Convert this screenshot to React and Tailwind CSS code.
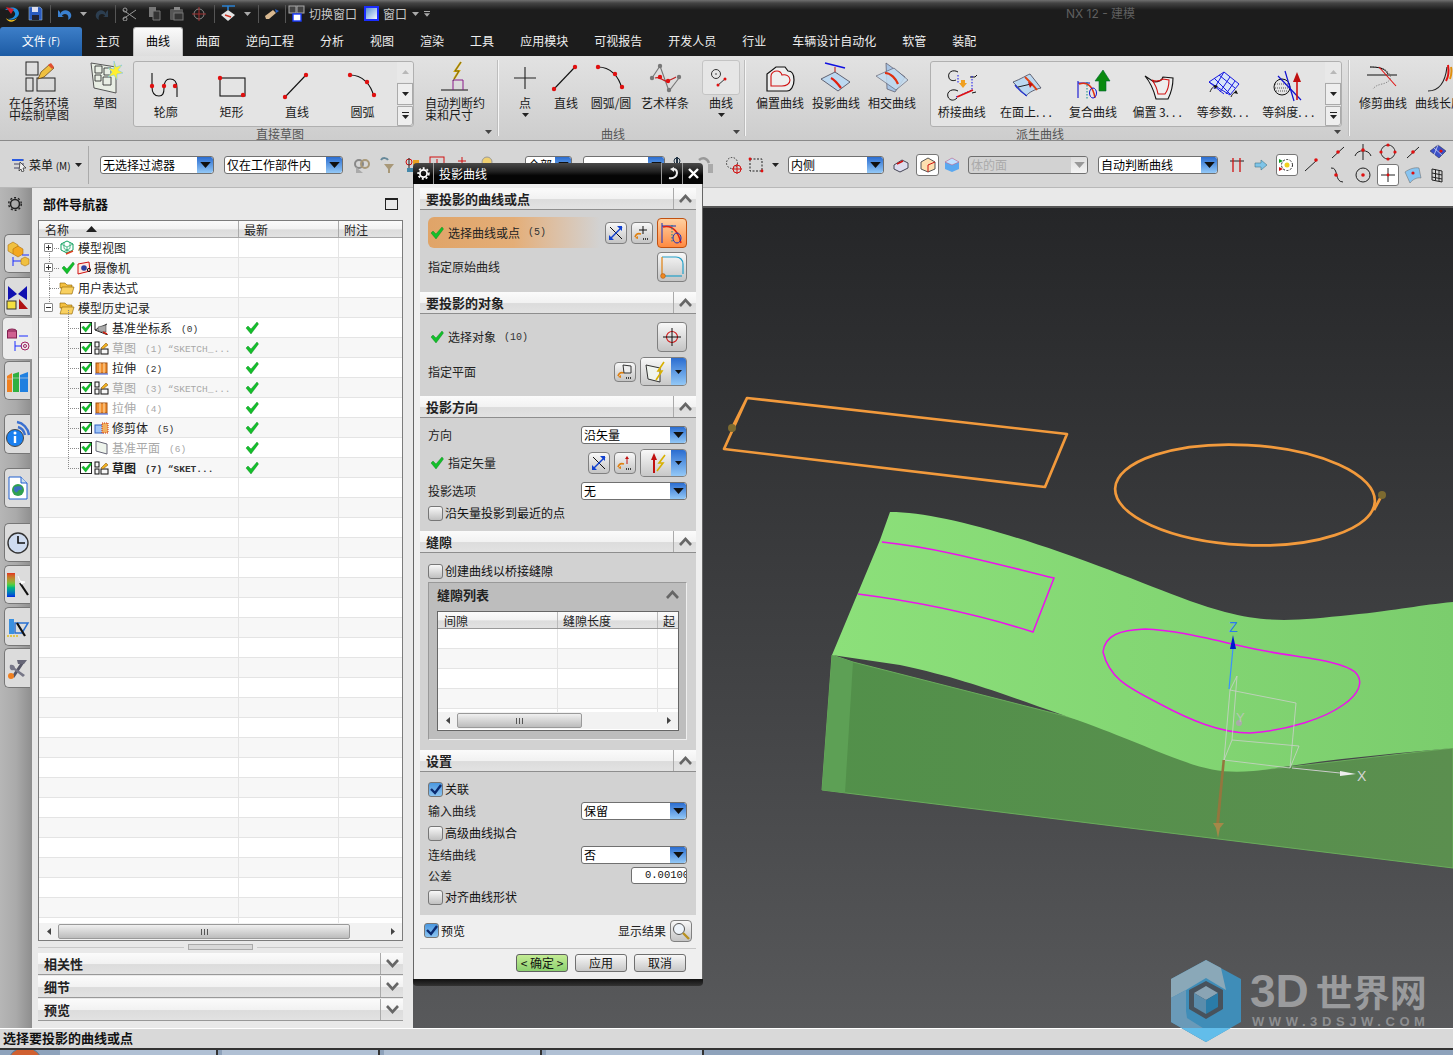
import React from 'react';

const R = ({ x, y, r = 2.2, c = '#e01010' }) => <circle cx={x} cy={y} r={r} fill={c} />;
const Svg = ({ w = 36, h = 36, children }) => (
  <svg width={w} height={h} viewBox={`0 0 ${w} ${h}`} fill="none" className="block shrink-0">{children}</svg>
);
const Tri = ({ c = '#222', w = 7, h = 4 }) => (
  <svg width={w} height={h} viewBox="0 0 7 4" className="block shrink-0"><path d="M0 0h7L3.5 4z" fill={c} /></svg>
);

/* ribbon icons */
const IcTask = () => <Svg><rect x="5" y="2" width="12" height="13" stroke="#222" /><rect x="5" y="18" width="7" height="13" stroke="#222" /><rect x="16" y="18" width="18" height="13" stroke="#222" /><path d="M17 19l3-7 9-8 4 4-10 9z" fill="#f0c040" stroke="#5a3a10" strokeWidth=".7" /><path d="M27 5l4 4 2-2-3-4z" fill="#e05030" /></Svg>;
const IcSketch = () => <Svg><path d="M4 3l25 4v26L7 28z" fill="#e8eee4" stroke="#555" /><path d="M8 6h7v7H8zM17 8h7v7h-7zM8 15h6v6H8zM16 17h8v8h-8z" stroke="#333" strokeWidth=".9" /><path d="M27 1l2 6 6-2-4 5 5 3-6 1 0 6-3-5-6 2 4-5-4-4 6 1z" fill="#ffef30" stroke="#7ac8e8" strokeWidth=".6" /></Svg>;
const IcProfile = () => <Svg w={34} h={30}><path d="M3 2v14c0 6 3 9 7 9s5-3 5-8 2-9 6-9 7 3 7 9v9" stroke="#111" strokeWidth="1.1" /><R x={3} y={15} /><R x={15} y={15} /><R x={26} y={15} /></Svg>;
const IcRect = () => <Svg w={34} h={30}><rect x="6" y="7" width="25" height="18" stroke="#111" strokeWidth="1.1" /><R x={6} y={7} /><R x={29} y={24} /></Svg>;
const IcLine = () => <Svg w={34} h={30}><path d="M5 26L26 4" stroke="#111" strokeWidth="1.1" /><R x={5} y={26} /><R x={26} y={4} /></Svg>;
const IcArc = () => <Svg w={34} h={30}><path d="M4 4c12 0 21 9 24 22" stroke="#111" strokeWidth="1.1" /><R x={4} y={4} /><R x={21} y={11} /><R x={28} y={24} /></Svg>;
const IcConstraint = () => <Svg><path d="M4 30h27" stroke="#111" /><path d="M16 30V20h10v10" stroke="#8a1a8a" /><path d="M24 2l-6 9h4l-5 8" stroke="#d4a800" strokeWidth="2" /><path d="M24 2l-6 9h4l-6 10" stroke="#333" strokeWidth=".5" /></Svg>;
const IcPlus = () => <Svg w={26} h={26}><path d="M13 2v22M2 13h22" stroke="#222" strokeWidth="1.1" /></Svg>;
const IcSpline = () => <Svg w={34} h={30}><path d="M4 15L12 3l9 25 10-13" stroke="#777" strokeWidth="1.1" /><path d="M7 15c6-2 8 4 12 3s5-2 9-4" stroke="#c02020" strokeWidth="1.3" /><R x={4} y={15} c="#777" /><R x={12} y={3} c="#777" /><R x={21} y={27} c="#777" /><R x={31} y={14} c="#777" /><R x={12} y={14} /><R x={20} y={18} /></Svg>;
const IcCurveMenu = () => <Svg w={22} h={22}><circle cx="6" cy="7" r="4.5" stroke="#333" /><circle cx="6" cy="7" r=".8" fill="#333" /><path d="M7 19l9-8" stroke="#333" /><R x={8} y={18} r={1.5} /><R x={15} y={12} r={1.5} /></Svg>;
const IcOffset = () => <Svg w={32} h={32}><path d="M3 29V12l9-7h9l3 4c4 0 6 4 6 9 0 6-3 11-7 11z" stroke="#111" strokeWidth="1.2" fill="#eee" /><path d="M7 14c0-3 3-5 6-5 3 0 4 1 5 4 4-1 8 1 8 5 0 4-4 6-8 6H7z" stroke="#d01010" strokeWidth="1.1" /></Svg>;
const IcProject = () => <Svg w={34} h={32}><path d="M6 1l20 5" stroke="#1010e0" strokeWidth="1.6" /><path d="M16 5v9" stroke="#c01010" /><path d="M13 11l3 5 3-5z" fill="#c01010" /><path d="M2 17l14-7 15 10-12 9z" fill="#bcd8f0" stroke="#445" strokeWidth=".8" /><path d="M12 16c4 2 7 6 10 10" stroke="#e02010" strokeWidth="2.2" /></Svg>;
const IcIntersect = () => <Svg w={34} h={32}><path d="M11 1l19 14-10 15-8-3z" fill="#a8c4e4" stroke="#556" strokeWidth=".7" /><path d="M1 14L19 6l14 12-12 10z" fill="#c4dcf0" stroke="#556" strokeWidth=".7" opacity=".85" /><path d="M10 11c6 0 11 6 13 11" stroke="#e03010" strokeWidth="2.2" /></Svg>;
const IcBridge = () => <Svg w={36} h={34}><path d="M14 3c-5-3-11 0-9 6 1 3 5 3 7 2M26 8h5l2-2" stroke="#111" /><path d="M14 22c-5-3-12 0-10 6 2 4 6 4 9 1M28 24l4-1" stroke="#111" /><path d="M12 28l16-7V6" stroke="#1010ee" strokeDasharray="1.5 1.5" /><path d="M13 28l16-7" stroke="#e01010" strokeWidth="1.6" /><path d="M14 6v8" stroke="#1010ee" strokeDasharray="1.5 1.5" /><path d="M17 11h4v3h2l-4 5-4-5h2z" fill="#f0a020" /></Svg>;
const IcOnFace = () => <Svg w={34} h={30}><path d="M3 11c8-3 14-7 17-8l11 14c-5 1-12 4-15 8z" fill="#bcd8f0" stroke="#445" strokeWidth=".8" /><path d="M15 6c4 4 9 9 12 13" stroke="#e04010" strokeWidth="1.8" /><path d="M8 16l13-3" stroke="#222" /><path d="M18 11l5 2-3 4z" fill="#c01010" /><path d="M5 14c3 4 7 8 12 11" stroke="#2030d0" strokeWidth="1.3" /></Svg>;
const IcComposite = () => <Svg w={36} h={34}><path d="M3 12v17M3 14h12" stroke="#1010d0" strokeWidth="1.1" /><path d="M4 15c8-3 14 2 16 14" stroke="#e03010" strokeWidth="1.5" /><path d="M12 13v18" stroke="#0a8a8a" strokeDasharray="1.5 1.5" /><ellipse cx="18" cy="24" rx="3.5" ry="5" stroke="#1010d0" /><path d="M23 12L31 1l7 11h-4v10h-7V12z" transform="translate(-3 0)" fill="#0a8a10" stroke="#063" strokeWidth=".6" /></Svg>;
const IcOffset3 = () => <Svg w={30} h={30}><path d="M1 5l9 6c6 0 8-2 9-5l10 1c0 8-2 15-5 21H12C10 20 7 12 1 5z" fill="#eee" stroke="#111" strokeWidth="1.1" /><path d="M8 9c4 2 8 1 11-1l6 1c0 6-1 10-4 14h-7C13 17 11 13 8 9z" stroke="#d01010" strokeWidth="1.1" /></Svg>;
const IcIso = () => <Svg w={36} h={32}><path d="M3 12L18 2l15 12-9 11z" fill="#d8e4f8" stroke="#1818e0" /><path d="M8 8l16 16M13 5l16 13M18 2L8 19M24 7L14 22M29 11L20 24M3 12l15 12" stroke="#1818e0" /><path d="M4 22c2-5 4-6 7-6" stroke="#222" /><path d="M25 27c1-3 3-5 6-5" stroke="#222" /><path d="M8 15l4 1-3 3z" fill="#111" /><path d="M30 20l2 4-4-1z" fill="#111" /></Svg>;
const IcSlope = () => <Svg w={34} h={32}><circle cx="9" cy="17" r="8" stroke="#111" /><path d="M2 14h14M2 18h14M3 21h12" stroke="#555" strokeDasharray="1 1" /><path d="M12 1l9 30" stroke="#1010d0" strokeWidth="1.2" /><path d="M5 6l23 24" stroke="#1010d0" strokeWidth="1.2" /><path d="M24 10v20" stroke="#d01010" strokeWidth="1.6" /><path d="M20 12l4-10 4 10z" fill="#c01010" /></Svg>;
const IcTrim = () => <Svg w={34} h={30}><path d="M4 4c8 0 16 0 20 8 2 5-3 8-8 9-4 1-7 2-9 5" stroke="#888" strokeDasharray="1.3 1.3" /><path d="M4 4c8 0 15 1 18 7" stroke="#111" /><path d="M1 12h30" stroke="#111" /><path d="M13 4l17 19" stroke="#e01010" strokeWidth="1.1" /></Svg>;
const IcLen = () => <Svg w={34} h={30}><path d="M6 28c10 0 17-7 19-24" stroke="#222" strokeWidth="1.1" /><path d="M24 18c3-5 3-10 2-16" stroke="#e01010" strokeWidth="2" /><path d="M29 4c1 4 0 9-1 12" stroke="#e09010" strokeWidth="2" /></Svg>;

const Item = ({ w, label, icon, children }) => (
  <div className={`flex shrink-0 flex-col items-center ${w}`}>
    <div className="flex h-[36px] items-center justify-center">{icon}</div>
    <div className="mt-px whitespace-nowrap text-[12px] leading-[12px] text-[#1a1a1a]">{label}</div>
    {children}
  </div>
);
const Dots = () => <span className="tracking-[3px]">...</span>;
const GalItem = ({ label, icon }) => (
  <div className="flex w-[65.6px] shrink-0 flex-col items-center pt-[6px]">
    <div className="flex h-[36px] items-center justify-center">{icon}</div>
    <div className="mt-[2px] whitespace-nowrap text-[12px] leading-[12px] text-[#1a1a1a]">{label}</div>
  </div>
);
const GalScroll = () => (
  <div className="ml-auto flex w-[16px] shrink-0 flex-col gap-px">
    <div className="flex h-[21px] items-center justify-center rounded-tr-[3px] bg-[#e8e8e8]"><svg width="7" height="4"><path d="M0 4h7L3.5 0z" fill="#b8b8b8" /></svg></div>
    <div className="flex h-[22px] items-center justify-center border border-[#aaa] bg-[#eee]"><Tri /></div>
    <div className="flex h-[21px] flex-col items-center justify-center gap-[2px] rounded-br-[3px] border border-[#aaa] bg-[#eee]"><div className="h-px w-[7px] bg-[#222]" /><Tri /></div>
  </div>
);
const VDiv = () => <div className="h-[76px] w-[2px] shrink-0 border-r border-[#f6f6f6] bg-[#bdbdbd]" />;

const Ribbon = () => (
  <div className="flex h-[85px] shrink-0 border-b border-[#8a8a8a] bg-linear-to-b from-[#e2e2e2] to-[#cdcdcd] pt-[4px]">
    <div className="w-[497px] shrink-0">
      <div className="flex h-[67px] items-start">
        <Item w="w-[78px]" label={<>在任务环境<br />中绘制草图</>} icon={<IcTask />} />
        <Item w="w-[54px]" label="草图" icon={<IcSketch />} />
        <div className="ml-[1px] mt-px flex h-[66px] w-[281px] shrink-0 rounded-[3px] border border-[#b0b0b0] bg-[#e4e4e4]">
          <div className="-ml-[1px] flex">
            <GalItem label="轮廓" icon={<IcProfile />} />
            <GalItem label="矩形" icon={<IcRect />} />
            <GalItem label="直线" icon={<IcLine />} />
            <GalItem label="圆弧" icon={<IcArc />} />
          </div>
          <GalScroll />
        </div>
        <Item w="w-[78px] ml-[2px]" label={<>自动判断约<br />束和尺寸</>} icon={<IcConstraint />} />
      </div>
      <div className="flex h-[14px] items-start">
        <div className="w-[256px] shrink-0" />
        <div className="text-[12px] leading-[13px] text-[#555]">直接草图</div>
        <div className="ml-[181px] mt-[3px]"><Tri c="#444" /></div>
      </div>
    </div>
    <div className="w-[1px] shrink-0"><VDiv /></div>
    <div className="w-[246px] shrink-0 pl-[6px]">
      <div className="flex h-[67px] items-start">
        <Item w="w-[42px]" label="点" icon={<IcPlus />}><div className="mt-[4px]"><Tri /></div></Item>
        <Item w="w-[40px]" label="直线" icon={<IcLine />} />
        <Item w="w-[50px]" label="圆弧/圆" icon={<IcArc />} />
        <Item w="w-[58px]" label="艺术样条" icon={<IcSpline />} />
        <div className="ml-[8px] flex w-[38px] shrink-0 flex-col items-center">
          <div className="flex h-[35px] w-[38px] items-center justify-center rounded-[3px] border border-[#c4c4c4] bg-[#e6e6e6]"><IcCurveMenu /></div>
          <div className="mt-[2px] text-[12px] leading-[12px] text-[#1a1a1a]">曲线</div>
          <div className="mt-[4px]"><Tri /></div>
        </div>
      </div>
      <div className="flex h-[14px] items-start pl-[97px]">
        <div className="text-[12px] leading-[13px] text-[#555]">曲线</div>
        <div className="ml-[108px] mt-[3px]"><Tri c="#444" /></div>
      </div>
    </div>
    <div className="w-[1px] shrink-0"><VDiv /></div>
    <div className="w-[603px] shrink-0 pl-[7px]">
      <div className="flex h-[67px] items-start">
        <Item w="w-[56px]" label="偏置曲线" icon={<IcOffset />} />
        <Item w="w-[56px]" label="投影曲线" icon={<IcProject />} />
        <Item w="w-[56px]" label="相交曲线" icon={<IcIntersect />} />
        <div className="ml-[10px] mt-px flex h-[66px] w-[412px] shrink-0 rounded-[3px] border border-[#b0b0b0] bg-[#e4e4e4]">
          <div className="-ml-[2px] flex">
            <GalItem label="桥接曲线" icon={<IcBridge />} />
            <GalItem label={<>在面上<Dots /></>} icon={<IcOnFace />} />
            <GalItem label="复合曲线" icon={<IcComposite />} />
            <GalItem label={<>偏置 3<Dots /></>} icon={<IcOffset3 />} />
            <GalItem label={<>等参数<Dots /></>} icon={<IcIso />} />
            <GalItem label={<>等斜度<Dots /></>} icon={<IcSlope />} />
          </div>
          <GalScroll />
        </div>
      </div>
      <div className="flex h-[14px] items-start pl-[264px]">
        <div className="text-[12px] leading-[13px] text-[#555]">派生曲线</div>
        <div className="ml-[270px] mt-[3px]"><Tri c="#444" /></div>
      </div>
    </div>
    <div className="w-[1px] shrink-0"><VDiv /></div>
    <div className="flex shrink-0 pl-[6px]">
      <Item w="w-[56px]" label="修剪曲线" icon={<IcTrim />} />
      <Item w="w-[56px]" label="曲线长度" icon={<IcLen />} />
    </div>
  </div>
);

/* dropdowns */
const BlueArrow = () => (
  <div className="flex w-[16px] shrink-0 items-center justify-center rounded-r-[2px] bg-linear-to-b from-[#2b6dd0] to-[#93c8f6]"><Tri c="#111" w={11} h={6} /></div>
);
const Drop = ({ text, w, disabled }) => (
  <div className={`flex h-[18px] shrink-0 overflow-hidden rounded-[3px] border border-[#707070] ${disabled ? 'bg-[#d2d2d2]' : 'bg-white'} ${w}`}>
    <div className={`flex-1 overflow-hidden whitespace-nowrap pl-[2px] text-[12px] leading-[16px] ${disabled ? 'text-[#aaa]' : 'text-black'}`}>{text}</div>
    {disabled ? <div className="flex w-[16px] shrink-0 items-center justify-center bg-linear-to-b from-[#ddd] to-[#f4f4f4]"><Tri c="#999" w={11} h={6} /></div> : <BlueArrow />}
  </div>
);
const Slot = ({ w = 'w-[25px]', children }) => <div className={`flex shrink-0 items-center justify-center ${w}`}>{children}</div>;

const Gr = ({ children, w = 18, h = 18 }) => <Svg w={w} h={h}>{children}</Svg>;
const SnapA = () => <Gr><path d="M3 15L15 4" stroke="#222" /><R x={9} y={9} r={1.8} /></Gr>;
const Toolbar = () => (
  <div className="flex h-[47px] shrink-0 items-center border-b border-[#b8b8b8] bg-[#d6d6d6] pt-[1px]">
    <div className="w-[10px] shrink-0" />
    <Slot w="w-[19px]"><Gr w={17} h={14}><path d="M1 2h12M3 6h10M3 10h8" stroke="#446" /><path d="M1 2h11" stroke="#2a5ae0" strokeWidth="2" /><path d="M9 4l6 6-3 0 1 3-2 1-1-3-2 2z" fill="#eee" stroke="#222" strokeWidth=".7" /></Gr></Slot>
    <div className="w-[44px] shrink-0 whitespace-nowrap text-[12px] text-[#111]">菜单 <span className="text-[10px]">(M)</span></div>
    <Slot w="w-[10px]"><Tri /></Slot>
    <div className="ml-[5px] h-[38px] w-px shrink-0 bg-[#aaa]" />
    <div className="ml-[11px]"><Drop text="无选择过滤器" w="w-[114px]" /></div>
    <div className="ml-[10px]"><Drop text="仅在工作部件内" w="w-[119px]" /></div>
    <div className="w-[6px] shrink-0" />
    <Slot><Gr><circle cx="6" cy="8" r="4" stroke="#888" strokeWidth="2" /><circle cx="12" cy="8" r="4" stroke="#a89878" strokeWidth="2" /><path d="M3 11v6h7" fill="#aaa" /></Gr></Slot>
    <Slot><Gr><path d="M3 4c2-3 6-2 7 0" stroke="#689" strokeWidth="2" /><path d="M6 8h10l-4 5v4h-2v-4z" fill="#a89878" /></Gr></Slot>
    <Slot><Gr><circle cx="6" cy="6" r="3" stroke="#d01010" /><path d="M6 2v14" stroke="#222" /><path d="M10 4h6v5h-6z" fill="#e8a020" /><path d="M4 12h8v4H4z" fill="#48a" /></Gr></Slot>
    <Slot><Gr><rect x="2" y="1" width="14" height="9" stroke="#d01010" /><path d="M9 3v4" stroke="#d01010" /></Gr></Slot>
    <Slot><Gr><path d="M9 1v8M5 5h8" stroke="#d01010" /></Gr></Slot>
    <Slot><Gr><circle cx="9" cy="6" r="5" fill="#f0d070" stroke="#999" /></Gr></Slot>
    <div className="ml-[26px]"><Drop text="全部" w="w-[47px]" /></div>
    <div className="ml-[11px]"><Drop text="" w="w-[82px]" /></div>
    <div className="w-[3px] shrink-0" />
    <Slot><Gr><path d="M5 1v8" stroke="#234" strokeWidth="2" /><circle cx="5" cy="5" r="3" stroke="#234" /></Gr></Slot>
    <Slot><Gr><path d="M2 4c4-3 8-2 10 3" stroke="#999" strokeWidth="2.5" /><rect x="11" y="8" width="5" height="9" fill="#aaa" /></Gr></Slot>
    <div className="w-[3px] shrink-0" />
    <Slot><Gr><circle cx="7" cy="7" r="5.5" stroke="#333" strokeDasharray="1.5 1.5" /><circle cx="12" cy="13" r="4" stroke="#d01010" /><path d="M7 13h10M12 8v10" stroke="#d01010" /></Gr></Slot>
    <Slot w="w-[22px]"><Gr><rect x="2" y="3" width="12" height="12" stroke="#222" strokeDasharray="2 1.5" /><R x={2} y={3} r={1.4} /><R x={14} y={15} r={1.4} /></Gr></Slot>
    <Slot w="w-[15px]"><Tri /></Slot>
    <div className="ml-[5px]"><Drop text="内侧" w="w-[96px]" /></div>
    <div className="w-[5px] shrink-0" />
    <Slot w="w-[24px]"><Gr><path d="M2 9l8-5 6 3v5l-8 4-6-3z" fill="#dde" stroke="#445" /><path d="M5 8l6-3" stroke="#d01010" strokeWidth="1.4" /></Gr></Slot>
    <div className="ml-[3px] flex h-[22px] w-[23px] shrink-0 items-center justify-center rounded-[3px] border border-[#777] bg-white"><Gr w={16} h={16}><path d="M1 5l7-4 7 4v7l-7 3-7-3z" fill="#fde0b0" stroke="#555" /><path d="M8 8v7M8 8l7-3" stroke="#d01010" /></Gr></div>
    <div className="w-[1px] shrink-0" />
    <Slot w="w-[24px]"><Gr w={16} h={16}><path d="M1 5l7-4 7 4v7l-7 3-7-3z" fill="#5aa8f0" /><path d="M1 5l7 3 7-3-7-4z" fill="#bfe0ff" stroke="#d05070" strokeWidth=".5" /></Gr></Slot>
    <div className="ml-[4px]"><Drop text="体的面" w="w-[120px]" disabled /></div>
    <div className="ml-[10px]"><Drop text="自动判断曲线" w="w-[120px]" /></div>
    <div className="w-[7px] shrink-0" />
    <Slot w="w-[24px]"><Gr w={16} h={16}><path d="M1 4h14" stroke="#222" /><path d="M4 1v14M11 1v14" stroke="#d01010" strokeWidth="1.3" /></Gr></Slot>
    <Slot w="w-[24px]"><Gr w={14} h={12}><path d="M1 4h6V1l6 5-6 5V8H1z" fill="#7ec4e8" stroke="#478" strokeWidth=".6" /></Gr></Slot>
    <div className="ml-[3px] flex h-[22px] w-[22px] shrink-0 items-center justify-center rounded-[3px] border border-[#777] bg-white"><Gr w={16} h={16}><circle cx="8" cy="8" r="5.5" stroke="#222" strokeDasharray="2 1.5" /><circle cx="8" cy="8" r="2.5" fill="#f0d020" /><path d="M0 2l4 2-4 2z" fill="#10a020" /><path d="M0 10l4 2-4 2z" fill="#d01010" /></Gr></div>
    <Slot w="w-[24px] ml-[1px]"><Gr w={16} h={16}><path d="M2 14L14 3" stroke="#222" /><R x={13} y={3} r={1.8} /></Gr></Slot>
    <div className="ml-[2px] grid w-[125px] shrink-0 grid-cols-5 gap-y-[3px]">
      <Slot><SnapA /></Slot>
      <Slot><Gr><path d="M9 1v16" stroke="#222" /><path d="M1 13c2-7 14-7 16 0" stroke="#222" /><R x={9} y={7} r={1.8} /></Gr></Slot>
      <Slot><Gr><circle cx="9" cy="9" r="7" stroke="#333" /><R x={9} y={2} r={1.6} /><R x={2} y={9} r={1.6} /><R x={16} y={9} r={1.6} /><R x={9} y={16} r={1.6} /></Gr></Slot>
      <Slot><SnapA /></Slot>
      <Slot><Gr><path d="M1 8L9 2l8 6-7 7z" fill="#3a50c8" stroke="#224" strokeWidth=".5" /><path d="M5 5l8 7M9 2l-4 10" stroke="#fff" strokeWidth=".6" /><R x={12} y={8} r={1.6} /></Gr></Slot>
      <Slot><Gr><path d="M2 2c8-1 3 14 12 14" stroke="#222" /><R x={7} y={9} r={1.8} /></Gr></Slot>
      <Slot><Gr><circle cx="9" cy="9" r="7" stroke="#222" /><R x={9} y={9} r={1.8} /></Gr></Slot>
      <Slot><div className="flex h-[22px] w-[22px] items-center justify-center rounded-[3px] border border-[#777] bg-white"><Gr w={14} h={14}><path d="M7 0v14M0 7h14" stroke="#222" /><R x={7} y={7} r={1.4} /></Gr></div></Slot>
      <Slot><Gr><path d="M1 6c4-3 10-5 14-4l2 10c-4-1-9 2-11 5z" fill="#88c4f0" stroke="#666" strokeWidth=".5" /><R x={9} y={7} r={1.6} /></Gr></Slot>
      <Slot><Gr w={14} h={16}><path d="M1 2l10 2v11l-10-2zM1 6l10 2M1 10l10 2M4.5 2.5v11M8 3v11" stroke="#222" /></Gr></Slot>
    </div>
  </div>
);

/* tab strip */
const tabs = ['主页', '曲线', '曲面', '逆向工程', '分析', '视图', '渲染', '工具', '应用模块', '可视报告', '开发人员', '行业', '车辆设计自动化', '软管', '装配'];
const TabBar = () => (
  <div className="flex h-[29px] shrink-0 items-stretch bg-[#1c1c1c]">
    <div className="flex w-[82px] shrink-0 items-center justify-center rounded-t-[3px] bg-linear-to-b from-[#3d7fc9] to-[#1c5ba4] pb-[2px] text-[12px] text-white">文件 <span className="ml-[2px] text-[10px]">(F)</span></div>
    <div className="w-px shrink-0" />
    {tabs.map((t) => t === '曲线' ? (
      <div key={t} className="flex shrink-0 items-center rounded-t-[3px] border border-b-0 border-[#bbb] bg-linear-to-b from-[#fafafa] to-[#dedede] px-[12px] pb-[2px] text-[12px] text-black">{t}</div>
    ) : (
      <div key={t} className="flex shrink-0 items-center px-[13px] pb-[2px] text-[12px] text-[#efefef]">{t}</div>
    ))}
  </div>
);
const TitleBar = () => (
  <div className="flex h-[27px] shrink-0 items-center bg-[linear-gradient(#707070_0,#444_3px,#1c1c1c_10px)] text-[12px] text-[#c8c8c8]">
    <Slot w="w-[23px]"><Gr><path d="M2 5c5-4 13-3 14 3 0 5-7 8-11 6 4 0 8-3 7-6-1-4-6-4-10-3z" fill="#1f8fe0" /><path d="M3 2l5 7 3-5z" fill="#d02030" /><path d="M3 13c3 3 8 3 11 0-3 5-9 5-11 0z" fill="#f0c020" /></Gr></Slot>
    <Slot w="w-[25px]"><Gr w={15} h={15}><path d="M1 1h11l2 2v11H1z" fill="#2a5ac0" stroke="#9bc" strokeWidth=".6" /><rect x="4" y="1" width="6" height="5" fill="#dde" /><rect x="4" y="9" width="7" height="5" fill="#223" /></Gr></Slot>
    <div className="ml-[2px] h-[18px] w-px shrink-0 bg-[#555]" />
    <Slot w="w-[25px] ml-[1px]"><Gr w={16} h={14}><path d="M3 7c2-5 9-5 11 0 1 3-1 5-3 6 1-3 0-6-3-6-2 0-3 1-3 2l2 1H1V3l2 2z" fill="#3a80d0" /></Gr></Slot>
    <Slot w="w-[12px]"><Tri c="#aaa" /></Slot>
    <Slot w="w-[26px]"><Gr w={14} h={14}><path d="M11 7C9 2 3 2 1 7c-1 3 1 5 3 6-1-3 0-6 3-6 2 0 3 1 3 2L8 10h5V3l-2 2z" fill="#2c3e50" /></Gr></Slot>
    <div className="h-[18px] w-px shrink-0 bg-[#555]" />
    <Slot w="w-[26px] ml-[1px]"><Gr w={16} h={14}><path d="M1 12l13-9M1 3l13 9" stroke="#999" /><circle cx="3" cy="12" r="2" stroke="#999" /><circle cx="3" cy="3" r="2" stroke="#999" /></Gr></Slot>
    <Slot w="w-[22px]"><Gr w={15} h={15}><path d="M2 1h7v10H2z" fill="#777" /><path d="M6 5h7v9H6z" fill="#333" stroke="#777" /></Gr></Slot>
    <Slot w="w-[24px]"><Gr w={16} h={15}><rect x="1" y="3" width="13" height="11" rx="1" fill="#555" /><rect x="5" y="1" width="6" height="3" fill="#888" /><rect x="5" y="7" width="9" height="7" fill="#333" stroke="#777" /></Gr></Slot>
    <Slot w="w-[22px]"><Gr w={16} h={16}><circle cx="7" cy="8" r="5" stroke="#888" /><path d="M7 1v14M0 8h14" stroke="#a03030" /></Gr></Slot>
    <div className="ml-[3px] h-[18px] w-px shrink-0 bg-[#555]" />
    <Slot w="w-[26px]"><Gr w={17} h={17}><path d="M2 1h13M8 1v4" stroke="#2a80d0" strokeWidth="1.6" /><path d="M1 10l7-5 7 5-7 6z" fill="#e4e4e4" /><path d="M5 10l6 2" stroke="#d03020" strokeWidth="1.6" /></Gr></Slot>
    <Slot w="w-[12px]"><Tri c="#aaa" /></Slot>
    <div className="ml-[5px] h-[18px] w-px shrink-0 bg-[#555]" />
    <Slot w="w-[25px]"><Gr w={16} h={12}><path d="M1 8l8-6 3 3-7 6H2z" fill="#d8b890" /><path d="M11 1l4 2-3 2z" fill="#2a60c0" /></Gr></Slot>
    <div className="ml-[1px] h-[18px] w-px shrink-0 bg-[#555]" />
    <Slot w="w-[22px]"><Gr w={18} h={18}><rect x="1" y="1" width="7" height="7" stroke="#aaa" fill="#444" /><rect x="9" y="1" width="7" height="7" stroke="#aaa" fill="#444" /><rect x="5" y="9" width="8" height="7" stroke="#1a3cff" strokeWidth="1.4" fill="#fff" /></Gr></Slot>
    <div className="w-[1px] shrink-0" />
    <div className="w-[55px] shrink-0 whitespace-nowrap">切换窗口</div>
    <div className="mr-[4px] h-[15px] w-[15px] shrink-0 border-2 border-[#1a2cff] bg-linear-to-br from-[#5a90d0] to-[#f4f8ff]" />
    <div className="w-[26px] shrink-0 whitespace-nowrap">窗口</div>
    <Slot w="w-[12px]"><Tri c="#aaa" /></Slot>
    <Slot w="w-[12px]"><div className="flex flex-col items-center gap-px"><div className="h-px w-[6px] bg-[#aaa]" /><Tri c="#aaa" w={6} /></div></Slot>
    <div className="ml-[633px] whitespace-nowrap text-[#5f5f5f]"><span className="font-['Inter',sans-serif]">NX 12 - </span>建模</div>
  </div>
);

/* left strip */
const Tab = ({ h, mt, active, children }) => (
  <div className={`flex shrink-0 items-center justify-center rounded-l-[5px] border border-r-0 ${active ? 'ml-[2px] w-[30px] border-[#999] bg-[#ececec]' : 'ml-[4px] w-[26px] border-[#777] bg-[#dcdcdc]'} ${h} ${mt}`}>{children}</div>
);
const LeftStrip = () => (
  <div className="flex w-[32px] shrink-0 flex-col bg-linear-to-r from-[#b6b6b6] via-[#aaa] to-[#8e8e8e]">
    <div className="flex h-[46px] shrink-0 items-start justify-center pt-[8px] pr-[2px]"><Gr w={16} h={16}><circle cx="8" cy="8" r="4.5" stroke="#222" strokeWidth="1.6" /><circle cx="8" cy="8" r="6.3" stroke="#222" strokeWidth="1.4" strokeDasharray="2 2" /></Gr></div>
    <Tab h="h-[39px]" mt="">
      <Gr w={24} h={26}><path d="M2 4l5-3 5 3v6l-5 3-5-3z" fill="#f0c040" stroke="#a06000" strokeWidth=".5" /><path d="M7 8l5-3 5 3v5l-5 3-5-3z" fill="#f4a820" stroke="#a06000" strokeWidth=".5" /><path d="M7 16v9M7 20h8M16 14h7" stroke="#1a2cff" /><path d="M15 18l4-2 4 2v5l-4 2-4-2z" fill="#f0c040" stroke="#a06000" strokeWidth=".5" /></Gr>
    </Tab>
    <Tab h="h-[39px]" mt="mt-[4px]">
      <Gr w={24} h={26}><path d="M2 2l9 8-9 6zM21 2l-9 8 9 6z" fill="#1010b0" /><rect x="1" y="17" width="9" height="8" fill="#f4e040" stroke="#333" /><path d="M13 15l9 10H13z" fill="#b01010" /></Gr>
    </Tab>
    <Tab h="h-[43px]" mt="mt-[1px]" active>
      <Gr w={24} h={26}><ellipse cx="6" cy="5" rx="4.5" ry="2" fill="#d06090" stroke="#802050" /><rect x="1.5" y="5" width="9" height="7" fill="#d06090" stroke="#802050" /><path d="M13 10h9M9 15v10M9 20h7" stroke="#1a2cff" /><circle cx="19" cy="20" r="4" stroke="#a02060" /><circle cx="19" cy="20" r="1.5" stroke="#a02060" /></Gr>
    </Tab>
    <Tab h="h-[39px]" mt="mt-[1px]">
      <Gr w={24} h={24}><path d="M1 7l5-3v19H1z" fill="#f08020" /><path d="M7 5l6-2v20H7z" fill="#30b040" /><path d="M14 6l8-3v20h-8z" fill="#2080e0" /><path d="M1 10h5M7 9h6M14 9h8" stroke="#ddd" strokeWidth=".6" /></Gr>
    </Tab>
    <Tab h="h-[40px]" mt="mt-[14px]">
      <Gr w={26} h={30}><path d="M12 3c6 1 11 6 12 13M13 8c4 1 6 4 7 8" stroke="#3a70d0" strokeWidth="2.5" /><circle cx="10" cy="19" r="8.5" fill="#1a80f0" stroke="#444" /><circle cx="10" cy="14" r="1.5" fill="#fff" /><path d="M10 17v7" stroke="#fff" strokeWidth="2.4" /></Gr>
    </Tab>
    <Tab h="h-[40px]" mt="mt-[14px]">
      <Gr w={20} h={24}><path d="M1 1h12l6 6v16H1z" fill="#fff" stroke="#2060d0" /><path d="M13 1v6h6" stroke="#2060d0" fill="#cde" /><circle cx="10" cy="14" r="6" fill="#30a050" /><path d="M6 11c3 0 7-2 8 1s-3 1-4 3-3 2-4-1z" fill="#3a70c0" /></Gr>
    </Tab>
    <Tab h="h-[39px]" mt="mt-[15px]">
      <Gr w={22} h={22}><circle cx="11" cy="11" r="10" fill="#cfdcf0" stroke="#333" strokeWidth="1.4" /><path d="M11 4v7h7" stroke="#111" strokeWidth="1.6" /></Gr>
    </Tab>
    <Tab h="h-[39px]" mt="mt-[3px]">
      <div className="relative h-[24px] w-[22px]">
        <div className="absolute left-0 top-0 h-[24px] w-[8px] bg-linear-to-b from-[#e03020] via-[#40d040] to-[#1020e0]" />
        <Gr w={22} h={24}><path d="M13 10l8 12" stroke="#111" strokeWidth="2.2" /><path d="M11 3l2 5 5 1-4 2" fill="#fff" stroke="#fff" /></Gr>
      </div>
    </Tab>
    <Tab h="h-[39px]" mt="mt-[3px]">
      <Gr w={24} h={24}><path d="M3 4h5v15H3z" fill="#3a90e0" /><path d="M9 8h13l-6 10H9z" stroke="#2a70d0" strokeWidth="1.5" /><path d="M11 8l8 13" stroke="#111" strokeWidth="2.2" /><path d="M1 21h12" stroke="#e0c020" strokeWidth="1.5" strokeDasharray="2 1" /></Gr>
    </Tab>
    <Tab h="h-[40px]" mt="mt-[2px]">
      <Gr w={24} h={24}><path d="M7 21l10-15" stroke="#556" strokeWidth="3" /><path d="M11 4h10l-3 4h-6z" fill="#667" /><path d="M4 9c3-1 5 1 5 3l10 7-2 2-9-7c-3 1-5-1-4-5z" fill="#778" /><circle cx="5" cy="20" r="3" fill="#f08020" /></Gr>
    </Tab>
  </div>
);

/* navigator */
const GreenTick = ({ s = 14 }) => <svg width={s} height={s} viewBox="0 0 14 14" className="block shrink-0"><path d="M1 7l2-2 3 3 6-7 1.5 2L6 13z" fill="#12c02a" stroke="#0a7a1a" strokeWidth=".4" /></svg>;
const TreeCheck = () => <div className="flex h-[12px] w-[12px] shrink-0 items-center justify-center border border-[#222] bg-white"><GreenTick s={11} /></div>;
const Expander = ({ minus }) => <div className="relative z-10 flex h-[9px] w-[9px] shrink-0 items-center justify-center rounded-[1px] border border-[#888] bg-white"><div className="h-px w-[5px] bg-[#333]" />{!minus && <div className="absolute h-[5px] w-px bg-[#333]" />}</div>;
const Folder = () => <Gr w={16} h={14}><path d="M1 2h5l2 2h5v3H1z" fill="#f4c040" stroke="#8a6000" strokeWidth=".6" /><path d="M1 13L3 6h12l-2 7z" fill="#f8d060" stroke="#8a6000" strokeWidth=".6" /></Gr>;
const NSketch = () => <Gr w={15} h={14}><rect x="1" y="1" width="4" height="5" stroke="#111" /><rect x="1" y="8" width="4" height="5" stroke="#111" /><rect x="7" y="8" width="7" height="5" stroke="#111" /><path d="M7 7l5-5 2 2-5 4z" fill="#f0b020" stroke="#7a4a00" strokeWidth=".5" /></Gr>;
const NExtrude = () => <Gr w={15} h={14}><rect x="2" y="2" width="11" height="10" fill="#f09030" stroke="#a05010" /><path d="M6 2v10M10 2v10" stroke="#ffe0b0" /><path d="M1 13h13" stroke="#3050d0" /></Gr>;
const NTrim = () => <Gr w={15} h={12}><rect x="1" y="3" width="8" height="8" fill="#9ec4f8" stroke="#3060c0" /><rect x="8" y="1" width="6" height="10" fill="#f0b060" stroke="#d03010" strokeDasharray="1 1" /></Gr>;
const NCsys = () => <Gr w={15} h={14}><path d="M1 1v8l13 5M1 9l12-6" stroke="#222" /><path d="M4 6l8-2v7l-8-1z" fill="#aaa" stroke="#333" strokeWidth=".5" /><path d="M9 11l4 2" stroke="#d02010" strokeWidth="1.4" /></Gr>;
const NPlane = () => <Gr w={15} h={15}><path d="M2 1l11 3v10L2 11z" fill="#eef4ec" stroke="#667" /></Gr>;
const NView = () => <Gr w={16} h={15}><path d="M8 1l6 3v6l-6 3-6-3V4z" stroke="#10a060" /><path d="M2 4l6 3 6-3M8 7v6M5 2.5v6l6 3M11 2.5v6l-6 3" stroke="#10a060" strokeWidth=".7" /><path d="M7 14l7-3" stroke="#e04020" strokeWidth="1.4" /></Gr>;
const NCam = () => <Gr w={15} h={14}><path d="M1 3l11-2 1 9-12 3z" fill="#ffe8e0" stroke="#d01010" /><circle cx="7" cy="7" r="2.8" fill="#3040a0" /><circle cx="12" cy="9" r="1.6" stroke="#111" /></Gr>;

const Mono = ({ children, bold, gray }) => <span className={`font-['Liberation_Mono',monospace] text-[9.5px] ${bold ? 'font-bold' : ''} ${gray ? 'text-[#a8a8a8]' : 'text-[#333]'}`}>{children}</span>;
const feats = [
  { ic: <NCsys />, t: '基准坐标系', a: '(0)' },
  { ic: <NSketch />, t: '草图', a: '(1) “SKETCH_...', gray: true },
  { ic: <NExtrude />, t: '拉伸', a: '(2)' },
  { ic: <NSketch />, t: '草图', a: '(3) “SKETCH_...', gray: true },
  { ic: <NExtrude />, t: '拉伸', a: '(4)', gray: true },
  { ic: <NTrim />, t: '修剪体', a: '(5)' },
  { ic: <NPlane />, t: '基准平面', a: '(6)', gray: true },
  { ic: <NSketch />, t: '草图', a: '(7) “SKET...', bold: true },
];
const Row = ({ i, children, tick }) => (
  <div className={`flex h-[20px] shrink-0 border-b border-[#e4e4e4] ${i % 2 === 0 ? 'bg-white' : 'bg-[#f7f7f7]'}`}>
    <div className="relative flex w-[200px] shrink-0 items-center overflow-hidden border-r border-[#e4e4e4] text-[12px] text-[#222]">{children}</div>
    <div className="flex w-[100px] shrink-0 items-center border-r border-[#e4e4e4] pl-[6px]">{tick && <GreenTick />}</div>
    <div className="flex-1" />
  </div>
);
const HB = ({ w, stub }) => <div className={`absolute h-0 border-t border-dotted border-[#888] ${stub} ${w}`} />;
const Scrollbar = ({ thumb, h = 'h-[17px]' }) => (
  <div className={`flex shrink-0 items-center bg-[#f2f2f2] ${h}`}>
    <div className="flex w-[19px] shrink-0 justify-center"><svg width="4" height="7"><path d="M4 0v7L0 3.5z" fill="#444" /></svg></div>
    <div className={`flex h-[15px] shrink-0 items-center justify-center rounded-[2px] border border-[#9a9a9a] bg-linear-to-b from-[#f0f0f0] to-[#bcbcbc] ${thumb}`}><div className="h-[6px] w-[7px] border-x border-[#555] bg-[linear-gradient(90deg,transparent_2px,#555_2px,#555_3px,transparent_3px)]" /></div>
    <div className="flex-1" />
    <div className="flex w-[19px] shrink-0 justify-center"><svg width="4" height="7"><path d="M0 0v7l4-3.5z" fill="#444" /></svg></div>
  </div>
);
const SecChev = ({ up }) => <svg width="13" height="9" viewBox="0 0 13 9" className="block shrink-0"><path d={up ? 'M1 8l5.5-6L12 8' : 'M1 1l5.5 6L12 1'} stroke="#666" strokeWidth="2.6" fill="none" /></svg>;
const headGrad = 'bg-[linear-gradient(#fbfbfb_0%,#f2f2f2_50%,#dcdcdc_55%,#e2e2e2_100%)]';
const Acc = ({ t }) => (
  <div className={`flex h-[22px] shrink-0 items-center border-b border-[#999] ${headGrad}`}>
    <div className="flex-1 pl-[6px] text-[13px] font-bold text-[#222]">{t}</div>
    <div className="flex h-full w-[23px] shrink-0 items-center justify-center border-l border-[#aaa]"><SecChev /></div>
  </div>
);
const Navigator = () => (
  <div className="flex w-[381px] shrink-0 flex-col bg-[#e9e9e9] pl-[6px]">
    <div className="flex h-[32px] w-[365px] shrink-0 items-center justify-between pl-[5px] pr-[5px]">
      <div className="text-[13px] font-bold text-[#111]">部件导航器</div>
      <div className="h-[12px] w-[13px] border border-t-2 border-[#222]" />
    </div>
    <div className="flex h-[721px] w-[365px] shrink-0 flex-col border border-[#7c7c7c] bg-white">
      <div className={`flex h-[17px] shrink-0 border-b border-[#a8a8a8] ${headGrad} text-[12px] leading-[17px] text-[#222]`}>
        <div className="flex w-[200px] shrink-0 items-center border-r border-[#aaa] pl-[6px]">名称<svg width="11" height="6" className="ml-[17px]"><path d="M0 6h11L5.5 0z" fill="#222" /></svg></div>
        <div className="w-[100px] shrink-0 border-r border-[#aaa] pl-[5px]">最新</div>
        <div className="flex-1 pl-[5px]">附注</div>
      </div>
      <div className="relative flex h-[685px] shrink-0 flex-col overflow-hidden">
        <Row i={0}><HB stub="left-[12px] top-[10px]" w="w-[8px]" /><div className="ml-[5px]"><Expander /></div><div className="ml-[6px]"><NView /></div><span className="ml-[3px]">模型视图</span></Row>
        <Row i={1}><HB stub="left-[12px] top-[10px]" w="w-[8px]" /><div className="ml-[5px]"><Expander /></div><div className="ml-[8px]"><GreenTick /></div><div className="ml-[2px]"><NCam /></div><span className="ml-[2px]">摄像机</span></Row>
        <Row i={2}><HB stub="left-[10px] top-[10px]" w="w-[10px]" /><div className="ml-[20px]"><Folder /></div><span className="ml-[3px]">用户表达式</span></Row>
        <Row i={3}><div className="ml-[5px]"><Expander minus /></div><div className="ml-[6px]"><Folder /></div><span className="ml-[3px]">模型历史记录</span></Row>
        {feats.map((f, k) => (
          <Row key={k} i={k + 4} tick>
            <HB stub="left-[29px] top-[10px]" w="w-[11px]" />
            <div className="ml-[41px]"><TreeCheck /></div>
            <div className="ml-[2px] flex w-[15px] justify-center">{f.ic}</div>
            <span className={`ml-[3px] whitespace-nowrap ${f.gray ? 'text-[#a8a8a8]' : ''} ${f.bold ? 'font-bold' : ''}`}>{f.t}</span>
            <span className="ml-[9px] whitespace-pre"><Mono bold={f.bold} gray={f.gray}>{f.a}</Mono></span>
          </Row>
        ))}
        {Array.from({ length: 23 }).map((_, k) => <Row key={k} i={k + 12} />)}
        <div className="absolute left-[10px] top-[10px] h-[62px] w-0 border-l border-dotted border-[#888]" />
        <div className="absolute left-[29px] top-[72px] h-[159px] w-0 border-l border-dotted border-[#888]" />
      </div>
      <Scrollbar thumb="w-[292px]" />
    </div>
    <div className="flex h-[12px] w-[365px] shrink-0 items-center">
      <div className="h-px flex-1 bg-[#c8c8c8]" /><div className="mx-[4px] h-[6px] w-[65px] border border-[#aaa] bg-[#d8d8d8]" /><div className="h-px flex-1 bg-[#c8c8c8]" />
    </div>
    <div className="flex w-[365px] flex-col gap-px">
      <Acc t="相关性" /><Acc t="细节" /><Acc t="预览" />
    </div>
  </div>
);

/* dialog */
const SecHead = ({ t }) => (
  <div className={`flex h-[22px] shrink-0 items-center border-b border-[#8e8e8e] ${headGrad}`}>
    <div className="flex-1 pl-[6px] text-[13px] font-bold leading-[22px] text-[#222]">{t}</div>
    <div className="flex h-full w-[23px] shrink-0 items-center justify-center border-l border-[#aaa]"><SecChev up /></div>
  </div>
);
const Btn = ({ w = 'w-[22px]', h = 'h-[22px]', active, children }) => (
  <div className={`flex shrink-0 items-center justify-center rounded-[4px] border ${active ? 'border-[#c05010] bg-linear-to-b from-[#ffd0a0] to-[#ff8a40]' : 'border-[#808080] bg-linear-to-b from-[#f8f8f8] to-[#c4c4c4]'} ${w} ${h}`}>{children}</div>
);
const IcSwap = () => <Gr w={16} h={16}><path d="M2 2l12 12" stroke="#111" /><path d="M14 2L2 14" stroke="#1040d0" strokeWidth="1.5" /><path d="M14 1v5l-5-5zM1 15v-5l5 5z" fill="#1040d0" /></Gr>;
const IcAddDots = ({ t = 'plus' }) => <Gr w={16} h={16}><path d="M1 12c1-3 3-4 6-3" stroke="#e08010" strokeWidth="1.6" /><path d="M1 13l3-2v3z" fill="#e08010" />{t === 'plus' && <path d="M9 1v8M5 5h8" stroke="#111" />}{t === 'plane' && <path d="M6 1l8 1v7H7z" fill="#eee" stroke="#333" />}{t === 'vec' && <><path d="M10 9V3" stroke="#c01010" /><path d="M8 4l2-3 2 3z" fill="#c01010" /></>}<path d="M9 14h1M11 14h1M13 14h1" stroke="#111" strokeWidth="1.6" /></Gr>;
const IcSelCurve = () => <Gr w={24} h={24}><path d="M2 2v20M2 5h14" stroke="#1030c0" /><path d="M3 6c9-2 15 4 18 16" stroke="#e02010" strokeWidth="1.5" /><path d="M12 4v18" stroke="#0a8a8a" strokeDasharray="1.5 1.5" /><ellipse cx="17" cy="17" rx="4" ry="5" stroke="#1030c0" /></Gr>;
const IcOrig = () => <Gr w={26} h={26}><path d="M3 3h14c4 0 7 3 7 7v10" stroke="#22a0c8" strokeWidth="1.2" /><path d="M3 22h20" stroke="#22a0c8" strokeWidth="1.2" /><path d="M3 3v19" stroke="#e08010" strokeWidth="1.2" /><circle cx="4" cy="22" r="2.4" fill="#f08820" stroke="#a05010" strokeWidth=".5" /></Gr>;
const IcTarget = () => <Gr w={22} h={22}><circle cx="11" cy="11" r="5.5" stroke="#d01010" strokeWidth="1.1" /><path d="M11 2v18M2 11h18" stroke="#111" /></Gr>;
const Combo = ({ h, children }) => (
  <div className={`ml-[4px] flex w-[47px] shrink-0 overflow-hidden rounded-[4px] border border-[#808080] ${h}`}>
    <div className="flex flex-1 items-center justify-center bg-linear-to-b from-[#f8f8f8] to-[#c8c8c8]">{children}</div>
    <div className="flex w-[15px] shrink-0 items-center justify-center bg-linear-to-b from-[#2b6dd0] to-[#93c8f6]"><Tri c="#111" /></div>
  </div>
);
const Cb = ({ on, label }) => (
  <div className="flex h-[16px] shrink-0 items-center">
    <div className={`flex h-[15px] w-[15px] shrink-0 items-center justify-center rounded-[3px] border border-[#777] ${on ? 'bg-linear-to-b from-[#4a98e0] to-[#8cc4f0]' : 'bg-linear-to-b from-[#f8f8f8] to-[#c0c0c0]'}`}>
      {on && <svg width="12" height="11" viewBox="0 0 12 11"><path d="M1 5l4 4 6-8" stroke="#0a2a70" strokeWidth="2.4" fill="none" /></svg>}
    </div>
    <span className="ml-[2px] whitespace-nowrap text-[12px] text-[#111]">{label}</span>
  </div>
);
const Lbl = ({ children, ml = '' }) => <span className={`whitespace-nowrap text-[12px] leading-[16px] text-[#222] ${ml}`}>{children}</span>;
const DR = ({ label, text, mt }) => (
  <div className={`flex h-[18px] shrink-0 items-center justify-between ${mt}`}>
    <Lbl>{label}</Lbl>
    <Drop text={text} w="w-[106px]" />
  </div>
);
const Dialog = () => (
  <div className="absolute left-[413px] top-[163px] z-20 flex w-[290px] flex-col text-[12px]">
    <div className="flex h-[21px] shrink-0 items-stretch rounded-t-[4px] bg-[linear-gradient(#4a4a4a_0,#222_40%,#050505_60%)] text-white">
      <div className="flex w-[21px] shrink-0 items-center justify-center border-r border-[#999]"><Gr w={13} h={13}><circle cx="6.5" cy="6.5" r="3.6" stroke="#fff" strokeWidth="1.8" /><circle cx="6.5" cy="6.5" r="5.4" stroke="#fff" strokeWidth="1.6" strokeDasharray="2 2" /></Gr></div>
      <div className="flex-1 pl-[5px] text-[12px] leading-[21px]">投影曲线</div>
      <div className="flex w-[21px] shrink-0 items-center justify-center border-l border-[#999]"><Gr w={13} h={13}><path d="M3 11c5 1 8-2 8-5s-2-4-4-4" stroke="#eee" strokeWidth="2" /><path d="M8 0v5L4 2z" fill="#eee" /></Gr></div>
      <div className="flex w-[21px] shrink-0 items-center justify-center border-l border-[#999]"><Gr w={13} h={13}><path d="M2 2l9 9M11 2l-9 9" stroke="#fff" strokeWidth="2.4" /></Gr></div>
    </div>
    <div className="flex h-[795px] shrink-0 flex-col border-x border-[#666] bg-[#efefef] pl-[6px] pr-[6px] pt-[4px]">
      <SecHead t="要投影的曲线或点" />
      <div className="flex h-[82px] shrink-0 flex-col bg-[#d2d2d2] pl-[8px] pr-[9px] pt-[7px]">
        <div className="flex h-[31px] shrink-0 items-center">
          <div className="flex h-[31px] w-[172px] shrink-0 items-center rounded-l-[6px] bg-linear-to-r from-[#e0a468] via-[#e4ae78] to-[#d2d2d2] pl-[2px]">
            <GreenTick /><Lbl ml="ml-[4px]">选择曲线或点</Lbl><span className="ml-[8px] font-['Liberation_Mono',monospace] text-[10px] text-[#333]">(5)</span>
          </div>
          <div className="ml-[5px]"><Btn><IcSwap /></Btn></div>
          <div className="ml-[4px]"><Btn><IcAddDots /></Btn></div>
          <div className="ml-[4px]"><Btn w="w-[30px]" h="h-[30px]" active><IcSelCurve /></Btn></div>
        </div>
        <div className="mt-[4px] flex h-[30px] shrink-0 items-center justify-between">
          <Lbl>指定原始曲线</Lbl>
          <Btn w="w-[30px]" h="h-[30px]"><IcOrig /></Btn>
        </div>
      </div>
      <SecHead t="要投影的对象" />
      <div className="flex h-[82px] shrink-0 flex-col bg-[#d2d2d2] pl-[8px] pr-[9px] pt-[8px]">
        <div className="flex h-[30px] shrink-0 items-center justify-between">
          <div className="flex items-center pl-[2px]"><GreenTick /><Lbl ml="ml-[4px]">选择对象</Lbl><span className="ml-[8px] font-['Liberation_Mono',monospace] text-[10px] text-[#333]">(10)</span></div>
          <Btn w="w-[30px]" h="h-[30px]"><IcTarget /></Btn>
        </div>
        <div className="mt-[5px] flex h-[29px] shrink-0 items-center">
          <Lbl>指定平面</Lbl>
          <div className="ml-auto"><Btn h="h-[20px]"><IcAddDots t="plane" /></Btn></div>
          <Combo h="h-[29px]"><Gr w={24} h={22}><path d="M2 4l14 3v14L4 18z" fill="#f0f4ee" stroke="#333" /><path d="M20 1l-6 9h4l-6 9" stroke="#d8b000" strokeWidth="1.6" /></Gr></Combo>
        </div>
      </div>
      <SecHead t="投影方向" />
      <div className="flex h-[113px] shrink-0 flex-col bg-[#d2d2d2] pl-[8px] pr-[9px] pt-[8px]">
        <DR label="方向" text="沿矢量" />
        <div className="mt-[5px] flex h-[28px] shrink-0 items-center">
          <div className="flex items-center pl-[2px]"><GreenTick /><Lbl ml="ml-[4px]">指定矢量</Lbl></div>
          <div className="ml-auto"><Btn><IcSwap /></Btn></div>
          <div className="ml-[4px]"><Btn><IcAddDots t="vec" /></Btn></div>
          <Combo h="h-[28px]"><Gr w={24} h={22}><path d="M10 21V6" stroke="#c01010" strokeWidth="2" /><path d="M7 8l3-7 3 7z" fill="#c01010" /><path d="M21 3l-6 8h4l-6 8" stroke="#d8b000" strokeWidth="1.6" /></Gr></Combo>
        </div>
        <DR label="投影选项" text="无" mt="mt-[5px]" />
        <div className="mt-[5px]"><Cb label="沿矢量投影到最近的点" /></div>
      </div>
      <SecHead t="缝隙" />
      <div className="flex h-[197px] shrink-0 flex-col bg-[#d2d2d2] pl-[8px] pr-[9px] pt-[10px]">
        <Cb label="创建曲线以桥接缝隙" />
        <div className="mt-[3px] flex h-[158px] shrink-0 flex-col border border-[#999] border-b-[#eee] border-r-[#eee] bg-[#bdbdbd] pl-[8px] pr-[7px]">
          <div className="flex h-[28px] shrink-0 items-center justify-between pb-[5px]">
            <span className="text-[13px] font-bold text-[#222]">缝隙列表</span>
            <SecChev up />
          </div>
          <div className="flex h-[120px] w-[242px] shrink-0 flex-col border border-[#666] bg-white">
            <div className={`flex h-[17px] shrink-0 border-b border-[#999] ${headGrad} text-[12px] leading-[17px] text-[#222]`}>
              <div className="w-[120px] shrink-0 border-r border-[#bbb] pl-[6px]">间隙</div>
              <div className="w-[100px] shrink-0 border-r border-[#bbb] pl-[5px]">缝隙长度</div>
              <div className="flex-1 overflow-hidden pl-[5px]">起</div>
            </div>
            <div className="flex h-[83px] shrink-0 flex-col overflow-hidden">
              {[0, 1, 2, 3, 4].map((k) => (
                <div key={k} className={`flex h-[20px] shrink-0 border-b border-[#e4e4e4] ${k % 2 ? 'bg-[#f7f7f7]' : 'bg-white'}`}>
                  <div className="w-[120px] shrink-0 border-r border-[#e4e4e4]" />
                  <div className="w-[100px] shrink-0 border-r border-[#e4e4e4]" />
                </div>
              ))}
            </div>
            <Scrollbar thumb="w-[125px]" />
          </div>
        </div>
      </div>
      <SecHead t="设置" />
      <div className="flex h-[143px] shrink-0 flex-col bg-[#d2d2d2] pl-[8px] pr-[9px] pt-[9px]">
        <Cb on label="关联" />
        <DR label="输入曲线" text="保留" mt="mt-[5px]" />
        <div className="mt-[5px]"><Cb label="高级曲线拟合" /></div>
        <DR label="连结曲线" text="否" mt="mt-[5px]" />
        <div className="mt-[3px] flex h-[17px] shrink-0 items-center justify-between">
          <Lbl>公差</Lbl>
          <div className="h-[17px] w-[56px] overflow-hidden whitespace-nowrap rounded-[3px] border border-[#707070] bg-white pl-[13px] font-['Liberation_Mono',monospace] text-[10.5px] leading-[15px] text-[#111]">0.00100</div>
        </div>
        <div className="mt-[5px]"><Cb label="对齐曲线形状" /></div>
      </div>
      <div className="flex h-[34px] shrink-0 items-center justify-between border-b border-[#c8c8c8] pb-[2px] pl-[4px] pr-[4px]">
        <Cb on label="预览" />
        <div className="flex items-center">
          <Lbl>显示结果</Lbl>
          <div className="ml-[4px]"><Btn><Gr w={18} h={18}><circle cx="7" cy="7" r="5.5" fill="#eef4fa" stroke="#555" /><path d="M11 11l6 6" stroke="#b89020" strokeWidth="2.4" /></Gr></Btn></div>
        </div>
      </div>
      <div className="mt-[5px] flex shrink-0 justify-end gap-[7px] pr-[10px]">
        <div className="flex h-[18px] w-[52px] items-center justify-center rounded-[3px] border border-[#606060] bg-linear-to-b from-[#c4ec94] to-[#8cd070] text-[12px] text-[#111]">&lt; 确定 &gt;</div>
        <div className="flex h-[18px] w-[52px] items-center justify-center rounded-[3px] border border-[#707070] bg-linear-to-b from-[#f8f8f8] to-[#c8c8c8] text-[12px] text-[#111]">应用</div>
        <div className="flex h-[18px] w-[52px] items-center justify-center rounded-[3px] border border-[#707070] bg-linear-to-b from-[#f8f8f8] to-[#c8c8c8] text-[12px] text-[#111]">取消</div>
      </div>
    </div>
    <div className="h-[7px] shrink-0 rounded-b-[4px] bg-linear-to-b from-[#111] to-[#333]" />
  </div>
);

/* viewport */
const Viewport = () => (
  <div className="flex min-w-0 flex-1 flex-col">
    <div className="h-[20px] shrink-0 border-b-2 border-[#555] bg-[#e9e9e9]" />
    <div className="h-[820px] shrink-0 overflow-hidden bg-linear-to-b from-[#252628] to-[#58595b]">
      <svg width="1040" height="820" viewBox="413 208 1040 820" className="block">
        <defs>
          <linearGradient id="topf" x1="0" x2="1" y1="0" y2="0"><stop offset="0" stopColor="#8ce07a" /><stop offset="1" stopColor="#7bcd6d" /></linearGradient>
          <linearGradient id="frontf" x1="0" x2="1" y1="0" y2="0"><stop offset="0" stopColor="#52904a" /><stop offset="1" stopColor="#5b8f4f" /></linearGradient>
        </defs>
        <path d="M832 655L853 662 1100 725 1190 762Q1230 775 1280 768L1453 748V868L822 790Z" fill="url(#frontf)" stroke="#6aac5c" strokeWidth="1" />
        <path d="M832 655L853 662 845 793 822 790Z" fill="#5da055" />
        <path d="M890 512C930 512 990 528 1060 552S1180 600 1225 612 1300 620 1350 615 1420 605 1453 602V748C1400 753 1340 758 1290 766S1220 775 1180 760 1110 731 1060 714 970 680 900 665L832 655 880 540Z" fill="url(#topf)" />
        <path d="M882 542C940 548 1000 565 1054 578L1033 632C980 615 920 602 858 594" fill="none" stroke="#ee10ee" strokeWidth="1.5" />
        <path d="M1103 652C1105 635 1120 630 1145 629C1180 630 1220 642 1260 650S1340 660 1355 672C1365 682 1358 695 1343 705C1325 718 1290 730 1250 733C1220 733 1190 720 1160 704S1110 680 1103 652Z" fill="none" stroke="#ee10ee" strokeWidth="1.5" />
        <path d="M747 398L1067 434 1045 487 724 449ZM732 428L747 398" fill="none" stroke="#f29a3c" strokeWidth="2.7" strokeLinejoin="round" />
        <circle cx="732" cy="428" r="4" fill="#7c6a30" />
        <ellipse cx="1245" cy="495" rx="130" ry="50" transform="rotate(3 1245 495)" fill="none" stroke="#f29a3c" strokeWidth="2.7" />
        <path d="M1374 510L1382 495" stroke="#f29a3c" strokeWidth="2.7" />
        <circle cx="1382" cy="495" r="4" fill="#7c6a30" />
        <path d="M1229 689L1233 648" stroke="#3a90ff" strokeWidth="1.2" />
        <path d="M1230 649l3-14 3 14z" fill="#0018d0" />
        <text x="1229" y="632" fontFamily="Liberation Sans" fontSize="14" fill="#2a7aee">Z</text>
        <path d="M1230 690L1224 760 1290 768 1296 703ZM1230 690L1237 676 1232 740M1232 740L1299 746 1290 768M1224 760L1232 740" fill="none" stroke="#d0d0d0" strokeOpacity=".75" strokeWidth="1" />
        <circle cx="1239" cy="723" r="3" fill="#aaa" />
        <text x="1236" y="722" fontFamily="Liberation Sans" fontSize="13" fill="#c4c4c4" fillOpacity=".8">Y</text>
        <path d="M1292 768L1340 773" stroke="#ccc" strokeWidth="1" />
        <path d="M1340 771l16 3-16 2z" fill="#eee" />
        <text x="1357" y="781" fontFamily="Liberation Sans" fontSize="14" fill="#d4d4d4">X</text>
        <path d="M1222.5 760L1225 760 1219 825 1216 825Z" fill="#94763e" />
        <path d="M1213 823h11l-4 5 -2 10-2-10z" fill="#a48848" />
      </svg>
    </div>
  </div>
);

const Watermark = () => (
  <>
    <svg width="72" height="84" viewBox="1170 959 72 84" className="absolute left-[1170px] top-[959px] z-10 block">
      <path d="M1206 960L1241 979V1022L1206 1042 1171 1022V979Z" fill="#3f8db8" />
      <path d="M1206 960L1221 968 1226 990 1206 978 1186 990 1171 998V979Z" fill="#8aa8b8" />
      <path d="M1171 998L1186 990V1011L1187 1018 1206 1030 1206 1042 1171 1022Z" fill="#6a9ab8" />
      <path d="M1181.5 1028H1230.5L1206 1042Z" fill="#62bdea" />
      <path d="M1206 981L1223 990V1009L1206 1019 1189 1009V990Z" fill="#47525c" />
      <path d="M1206 986L1218 993 1206 1000 1194 993Z" fill="#8aa4b4" />
      <path d="M1194 993L1206 1000V1014L1194 1007Z" fill="#5a8cab" />
      <path d="M1218 993L1206 1000V1014L1218 1007Z" fill="#2a7ca8" />
    </svg>
    <div className="absolute left-[1250px] top-[972px] z-10 flex h-[38px] items-baseline whitespace-nowrap leading-[38px] text-[#9a9b9d]">
      <span className="font-['Liberation_Sans',sans-serif] text-[46px] font-bold">3D</span>
      <span className="ml-[7px] text-[37px] font-bold">世界网</span>
    </div>
    <div className="absolute left-[1252px] top-[1015px] z-10 whitespace-nowrap font-['Liberation_Sans',sans-serif] text-[13px] font-bold leading-[13px] tracking-[4.6px] text-[#8d8e90]">WWW.3DSJW.COM</div>
  </>
);

export default function App() {
  return (
    <div className="relative flex h-[1055px] w-[1453px] flex-col overflow-hidden bg-[#d6d6d6] font-['Noto_Sans_CJK_SC','Liberation_Sans',sans-serif] text-[12px]">
      <TitleBar />
      <TabBar />
      <Ribbon />
      <Toolbar />
      <div className="flex h-[840px] shrink-0">
        <LeftStrip />
        <Navigator />
        <Viewport />
      </div>
      <div className="flex h-[20px] shrink-0 items-center border-t border-[#fff] bg-[#d9d9d9] pb-[2px] pl-[3px] text-[13px] font-bold text-[#111]">选择要投影的曲线或点</div>
      <div className="flex h-[7px] shrink-0 items-stretch border-t-2 border-[#333] bg-[#8ea2bb]">
        <div className="flex w-[60px] shrink-0 justify-center overflow-hidden"><div className="-ml-[10px] mt-[-2px] h-[28px] w-[34px] rounded-full border border-[#4a80a8] bg-[#d06030]" /></div>
        <div className="w-[158px] shrink-0 border-r-2 border-[#333] bg-[#b0c0d4]" />
        <div className="ml-[4px] w-[158px] shrink-0 border-r-2 border-[#333] bg-[#b0c0d4]" />
        <div className="ml-[4px] w-[158px] shrink-0 border-r-2 border-[#333] bg-[#b0c0d4]" />
        <div className="ml-[4px] w-[158px] shrink-0 border-r-2 border-[#333] bg-[#b0c0d4]" />
      </div>
      <Dialog />
      <Watermark />
    </div>
  );
}
